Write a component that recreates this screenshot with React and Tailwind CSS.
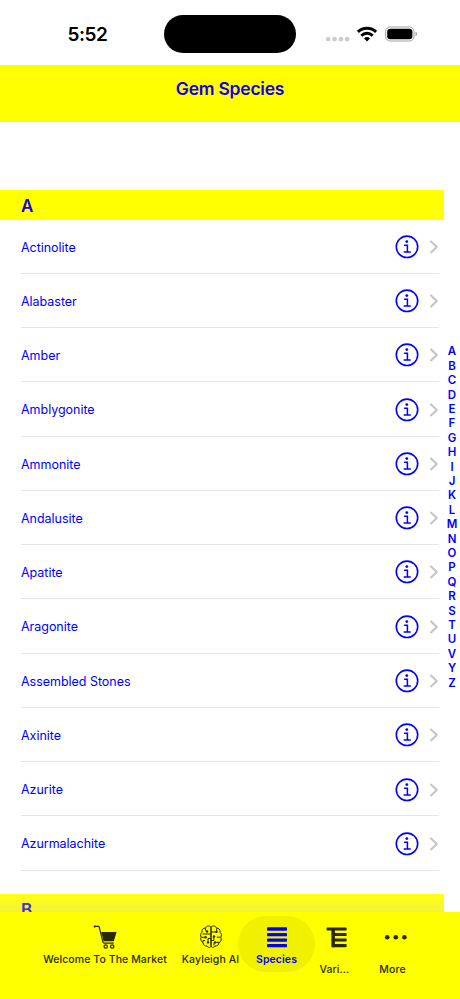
import { useState } from "react";

const species = [
  "Actinolite",
  "Alabaster",
  "Amber",
  "Amblygonite",
  "Ammonite",
  "Andalusite",
  "Apatite",
  "Aragonite",
  "Assembled Stones",
  "Axinite",
  "Azurite",
  "Azurmalachite",
];

const letters = "ABCDEFGHIJKLMNOPQRSTUVYZ".split("");

function StatusBar() {
  return (
    <div className="flex h-[65px] shrink-0 items-start bg-white">
      <div className="w-[164px] pt-[23px] pl-[67.5px] text-[19px] leading-6 font-semibold tracking-[-0.5px] text-black">
        5:52
      </div>
      <div className="mt-[14.5px] h-[38.5px] w-[132px] rounded-full bg-black" />
      <svg className="mt-5 ml-[26px] h-[30px] w-[100px]" viewBox="0 0 100 30">
        {/* Signal dots */}
        <g fill="#cbcbcb">
          <rect x="4" y="17" width="4.4" height="4.2" rx="1.5" />
          <rect x="10.4" y="17" width="4.4" height="4.2" rx="1.5" />
          <rect x="16.7" y="17" width="4.4" height="4.2" rx="1.5" />
          <rect x="22.9" y="17" width="4.4" height="4.2" rx="1.5" />
        </g>
        {/* Wifi */}
        <g fill="none" stroke="#000" strokeWidth="2.9">
          <path d="M35.9 11.9a13 13 0 0 1 18.2 0" />
          <path d="M39.3 15.7a8 8 0 0 1 11.4 0" />
        </g>
        <path d="M45 21.4l-3-3a4.3 4.3 0 0 1 6 0z" fill="#000" />
        {/* Battery */}
        <rect x="63.6" y="7" width="28.4" height="14" rx="4.5" fill="none" stroke="#a0a0a0" />
        <rect x="65.2" y="8.7" width="25.2" height="10.6" rx="3" fill="#000" />
        <path d="M93.5 11.8c2 .6 2 3.8 0 4.4z" fill="#a0a0a0" />
      </svg>
    </div>
  );
}

function InfoIcon() {
  return (
    <svg className="h-6 w-6" viewBox="0 0 24 24" fill="none" stroke="#0000ff">
      <circle cx="12" cy="11.8" r="10.7" strokeWidth="1.6" />
      <circle cx="11.8" cy="6.6" r="1.4" fill="#0000ff" stroke="none" />
      <path d="M9.6 10.2h2.8V17M9.2 17.1h6" strokeWidth="1.5" strokeLinecap="round" />
    </svg>
  );
}

function CartIcon() {
  return (
    <svg className="h-6 w-6 shrink-0" viewBox="0 0 24 24" fill="none" stroke="#2a2a00">
      <path d="M1.2 1.3h4.1q.7 0 .9.8L10 17.2q.3 1 1.3 1h9.4" strokeWidth="1.2" />
      <path d="M8.2 7h15.4L20.8 16.3H10.6z" fill="#2a2a00" stroke="none" />
      <circle cx="1.7" cy="1.6" r="1.1" fill="#2a2a00" stroke="none" />
      <circle cx="12.7" cy="21.5" r="1.7" strokeWidth="1.2" />
      <circle cx="19.2" cy="21.5" r="1.7" strokeWidth="1.2" />
    </svg>
  );
}

function BrainIcon() {
  return (
    <svg className="h-6 w-6 shrink-0" viewBox="0 0 24 24" fill="none" stroke="#2a2a00" strokeWidth="1">
      {/* Both halves */}
      <path d="M12 2.2C10 .2 7.4.7 6.6 3 4.4 2.8 2.6 4.7 3 7.2 1.3 8.4 1.2 10.8 2.2 12.2 1.3 14.4 2 16.8 4 17.6c.1 2.3 2.2 3.8 4 3.4 1 2.2 4 1.8 4-.6z" />
      <path d="M12 2.2C14 .2 16.6.7 17.4 3c2.2-.2 4 1.7 3.6 4.2 1.7 1.2 1.8 3.6.8 5 .9 2.2.2 4.6-1.8 5.4-.1 2.3-2.2 3.8-4 3.4-1 2.2-4 1.8-4-.6z" />
      {/* Circuit lines */}
      <path d="M6.5 3.2v2l1.5 1.3M3.5 9h8.5M2.4 12.3h3.8M4 17.5v-2h2M12 13.5H9v3.5M17.7 3.2v3.2M12 7h5M12 15.5h2.8V12M21.5 12.2h-3.7M15 20.5v-2.3M20 17.4h-3" />
      <g fill="#2a2a00" stroke="none">
        <circle cx="8" cy="6.5" r="1.2" />
        <circle cx="6.6" cy="12.2" r="1.2" />
        <circle cx="9" cy="17.4" r="1.2" />
        <circle cx="17.5" cy="6.9" r="1.2" />
        <circle cx="15" cy="11.5" r="1.2" />
        <circle cx="16" cy="17.4" r="1.2" />
      </g>
    </svg>
  );
}

function ListIcon() {
  return (
    <svg className="h-6 w-6 shrink-0" viewBox="0 0 24 24" fill="#0000ff">
      <rect x="2" y="2.3" width="20" height="3.4" rx=".7" />
      <rect x="2" y="7.9" width="20" height="3.4" rx=".7" />
      <rect x="2" y="13.4" width="20" height="3.4" rx=".7" />
      <rect x="2" y="18.9" width="20" height="3.4" rx=".7" />
    </svg>
  );
}

function TreeIcon() {
  return (
    <svg className="h-6 w-6 shrink-0" viewBox="0 0 24 24" fill="#2a2a00">
      <rect x="1.6" y="2.6" width="20" height="3" rx=".7" />
      <rect x="6.4" y="3" width="3.5" height="19.3" rx=".7" />
      <rect x="6.8" y="8.1" width="14.8" height="3" rx=".7" />
      <rect x="6.8" y="13.6" width="14.8" height="3" rx=".7" />
      <rect x="6.8" y="19.1" width="14.8" height="3.2" rx=".7" />
    </svg>
  );
}

function MoreIcon() {
  return (
    <svg className="h-6 w-6 shrink-0" viewBox="0 0 24 24" fill="#2a2a00">
      <circle cx="3.2" cy="12.3" r="2.3" />
      <circle cx="11.8" cy="12.3" r="2.3" />
      <circle cx="20.4" cy="12.3" r="2.3" />
    </svg>
  );
}

function TabBar({ tab, setTab }) {
  const base =
    "flex h-14 shrink-0 flex-col items-center pt-[9px] text-[10.5px] leading-4 font-medium tracking-[0.08px] whitespace-nowrap";

  return (
    <nav className="flex h-[87px] shrink-0 items-start bg-[#ffff00] pt-1 pl-[35px] text-[#2a2a00]">
      <button onClick={() => setTab("market")} className={`${base} w-[140px]`}>
        <CartIcon />
        <span className="mt-[3px]">Welcome To The Market</span>
      </button>
      <button onClick={() => setTab("ai")} className={`${base} w-[63px] pl-[8px]`}>
        <BrainIcon />
        <span className="mt-[3px]">Kayleigh AI</span>
      </button>
      <button
        onClick={() => setTab("species")}
        className={`${base} w-[77px] rounded-full ${
          tab === "species" ? "bg-[#f0f000] text-[#0000ff]" : ""
        }`}
      >
        <ListIcon />
        <span className="mt-[3px] font-semibold">Species</span>
      </button>
      <button onClick={() => setTab("varieties")} className={`${base} w-[43px]`}>
        <TreeIcon />
        <span className="mt-[13px] mr-1">Vari...</span>
      </button>
      <button onClick={() => setTab("more")} className={`${base} w-[75px]`}>
        <MoreIcon />
        <span className="mt-[13px] mr-[6px]">More</span>
      </button>
    </nav>
  );
}

export default function App() {
  const [tab, setTab] = useState("species");

  return (
    <div className="flex h-[999px] w-[460px] flex-col overflow-hidden bg-white font-['Inter',sans-serif] text-[#0000ff]">
      <StatusBar />

      <header className="flex h-[56.5px] shrink-0 justify-center bg-[#ffff00] pt-[12px]">
        <h1 className="text-[17.5px] leading-6 font-semibold tracking-[-0.25px] text-[#1300e8]">
          Gem Species
        </h1>
      </header>

      <div className="flex min-h-0 flex-1 overflow-hidden">
        {/* Species list */}
        <main className="w-[444px] shrink-0 pt-[68.5px]">
          <h2 className="h-[29.5px] bg-[#ffff00] pl-[21px] text-[17px] leading-[32px] font-semibold text-[#1300e8]">
            A
          </h2>
          <ul className="mr-[5px] ml-[21px]">
            {species.map((name) => (
              <li
                key={name}
                className="flex h-[54.27px] items-center border-b border-[#e5e5e6] pt-[1.5px] text-[12.5px] tracking-[-0.03px]"
              >
                <span className="flex-1 pt-[2px]">{name}</span>
                <InfoIcon />
                <svg
                  className="ml-[10px] h-4 w-[10px]"
                  viewBox="0 0 10 16"
                  fill="none"
                  stroke="#c4c4c6"
                  strokeWidth="2.1"
                  strokeLinecap="round"
                  strokeLinejoin="round"
                >
                  <path d="M2 2.5l5.8 5.4L2 13.4" />
                </svg>
              </li>
            ))}
          </ul>
          {/* Next section, partly under the tab bar */}
          <h2 className="mt-[23px] h-[30px] bg-gradient-to-b from-[#ffff0c] from-0% to-[#f3f336] to-60% pl-[21px] text-[17px] leading-[32px] font-semibold text-[#3d2fe0]">
            B
          </h2>
        </main>

        {/* Letter index */}
        <aside className="flex w-4 flex-col items-center pt-[222.8px] text-[11.5px] font-semibold">
          {letters.map((l) => (
            <span key={l} className="h-[14.41px] leading-[14.41px]">
              {l}
            </span>
          ))}
        </aside>
      </div>

      <TabBar tab={tab} setTab={setTab} />
    </div>
  );
}
